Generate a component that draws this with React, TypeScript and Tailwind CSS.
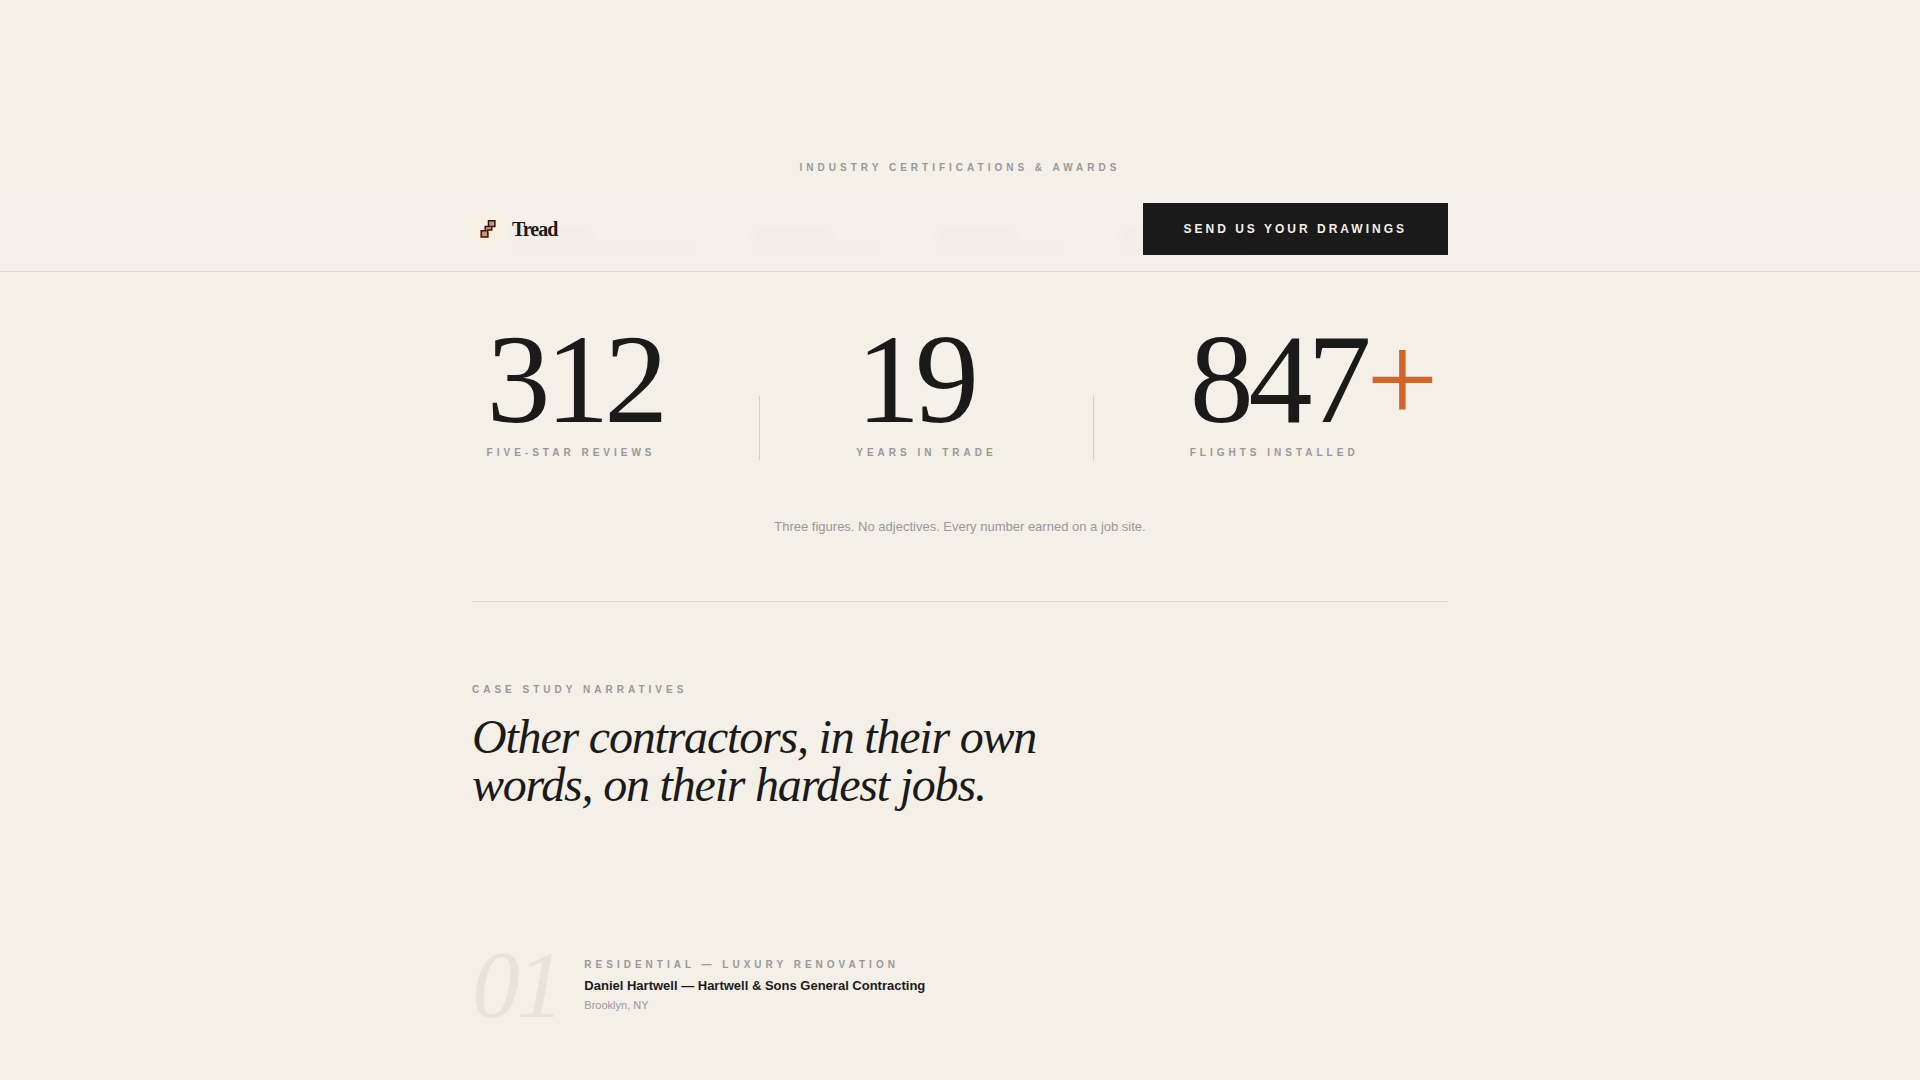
const label = "text-[10px] leading-[15px] font-bold tracking-[0.4em] uppercase text-[#999999]";
const serif = "font-['Liberation_Serif',serif]";

const stats = [
  { value: "312", suffix: "", caption: "Five-Star Reviews" },
  { value: "19", suffix: "", caption: "Years in Trade" },
  { value: "847", suffix: "+", caption: "Flights Installed" },
];

const frosted = [
  { title: "w-20", line: "w-46" },
  { title: "w-20", line: "w-32" },
  { title: "w-20", line: "w-32" },
  { title: "w-20", line: "w-32" },
];

function Logo() {
  return (
    <svg viewBox="0 0 32 32" className="size-8" aria-hidden="true">
      <rect width="32" height="32" rx="2" fill="#f8f0e2" />
      <g fill="#d98e74" stroke="#2a1814" strokeWidth="1.5">
        <path d="M16.5 7.7h6.4v5.8h-3.2v3.4h-4v3.2h.2v4H9.2v-6.4h4v-4.2h3.3z" />
        <path d="M17 13.3h2.5M13.2 17.7h2.6" fill="none" strokeWidth="1" />
      </g>
    </svg>
  );
}

function Header() {
  return (
    <header className="border-b border-[#1a1a1a]/10 bg-[#f5f0e9]">
      <div className="relative mx-auto flex max-w-5xl items-center justify-between px-6 py-4">
        <div className="absolute inset-x-6 top-9 flex gap-14 overflow-hidden pl-10" aria-hidden="true">
          {frosted.map((f, i) => (
            <div key={i} className="flex flex-col gap-1 py-1 blur-[4px]">
              <div className={`h-3 bg-[#1a1a1a]/2 ${f.title}`} />
              <div className={`h-3 bg-[#1a1a1a]/1 ${f.line}`} />
            </div>
          ))}
        </div>
        <a href="#top" className="relative flex items-center gap-2">
          <Logo />
          <span className={`${serif} text-xl leading-7 font-bold tracking-tighter`}>Tread</span>
        </a>
        <button className="relative border border-[#1a1a1a] bg-[#1a1a1a] px-10 py-4 text-xs leading-[18px] font-bold tracking-[0.25em] text-[#f5f0e8] uppercase">
          Send us your drawings
        </button>
      </div>
    </header>
  );
}

export default function App() {
  return (
    <div className="min-h-screen bg-[#f4efe7] pt-40 font-['Liberation_Sans',sans-serif] text-[#1a1a1a]">
      <p className={`${label} mb-3 text-center`}>Industry Certifications &amp; Awards</p>
      <Header />
      <main className="mx-auto max-w-5xl px-6">
        <section className="border-b border-[#1a1a1a]/10 pt-12 pb-16">
          <dl className="flex items-end justify-center gap-24">
            {stats.map((s, i) => (
              <div key={s.caption} className="contents">
                {i > 0 && <div className="h-16 w-px bg-[#1a1a1a]/15" />}
                <div className="flex flex-col-reverse gap-1.5">
                  <dt className={label}>{s.caption}</dt>
                  <dd className={`${serif} text-[128px] leading-[119px] tracking-[-0.04em]`}>
                    {s.value}
                    {s.suffix && <span className="text-[#d4652a]">{s.suffix}</span>}
                  </dd>
                </div>
              </div>
            ))}
          </dl>
          <p className="mt-14 text-center text-[13px] leading-[21px] text-[#999999]">
            Three figures. No adjectives. Every number earned on a job site.
          </p>
        </section>
        <section className="pt-20">
          <p className={label}>Case Study Narratives</p>
          <h2 className={`${serif} mt-4 max-w-2xl text-5xl leading-12 tracking-tight italic`}>
            Other contractors, in their own words, on their hardest jobs.
          </h2>
          <article className="mt-32 flex items-center gap-6">
            <span className={`${serif} text-8xl leading-24 tracking-[-0.04em] text-[#1a1a1a]/6 italic`}>01</span>
            <div>
              <p className={label}>Residential — Luxury Renovation</p>
              <h3 className="mt-1 text-[13px] leading-5 font-bold">
                Daniel Hartwell — Hartwell &amp; Sons General Contracting
              </h3>
              <p className="text-[11px] leading-[18px] text-[#999999]">Brooklyn, NY</p>
            </div>
          </article>
        </section>
      </main>
    </div>
  );
}
